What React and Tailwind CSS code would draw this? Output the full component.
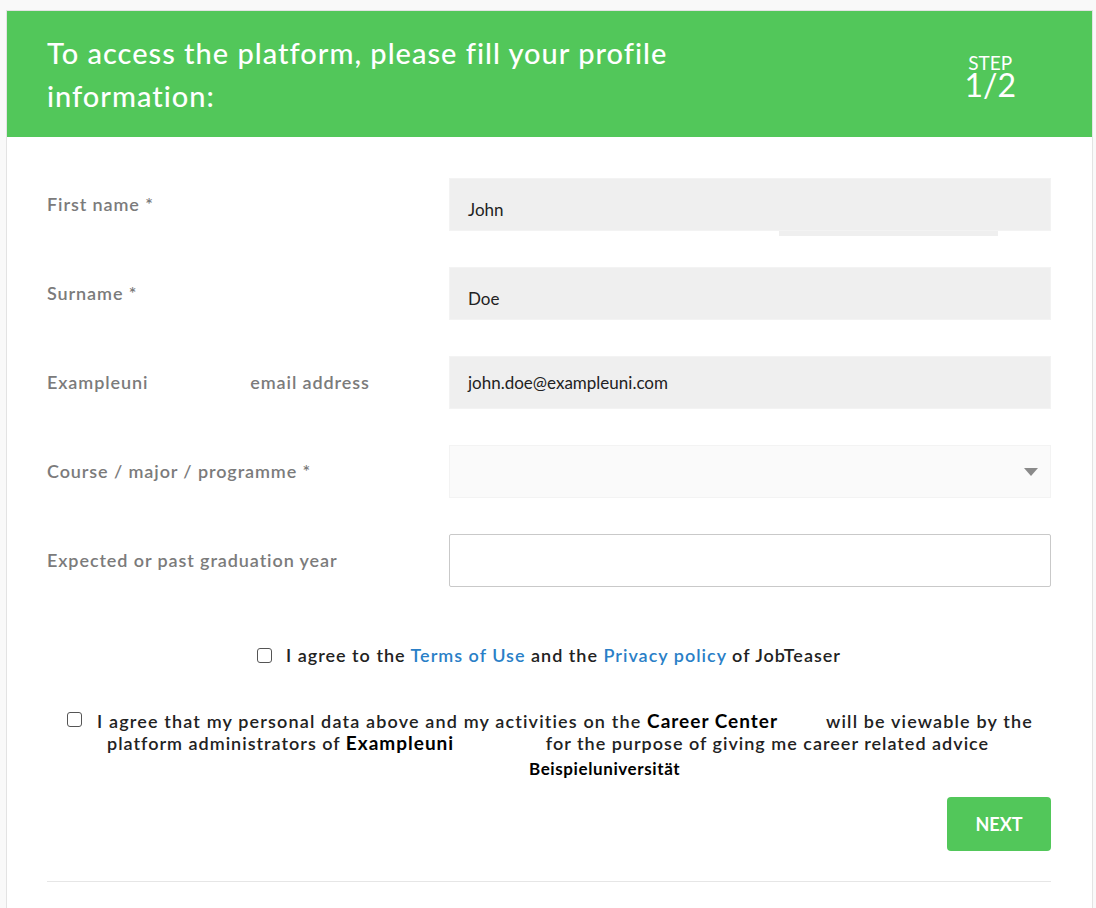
import React from 'react';

const Row = ({ label, children }) => (
  <div className="flex items-center h-[53px] mb-[36px]">
    <div className="w-[402px] shrink-0 text-[18px] tracking-[0.05em] font-semibold text-[#7b7b7b]">{label}</div>
    <div className="flex-1 h-full relative">{children}</div>
  </div>
);

const Filled = ({ value, low }) => (
  <div
    className={
      'h-full w-full bg-[#efefef] border border-[#f3f3f3] flex items-center pl-[18px] text-[17px] text-[#222] font-[\'Open_Sans\',sans-serif] ' +
      (low ? 'pt-[10px]' : 'pt-[1px]')
    }
  >
    {value}
  </div>
);

const App = () => {
  return (
    <div className="w-[1096px] h-[908px] bg-[#f9f9f9] pt-[10px] pl-[6px] overflow-hidden font-['Lato',sans-serif]">
      <div className="w-[1087px] h-[920px] bg-white border border-[#e3e3e3]">
        <div className="bg-[#52c75a] h-[126px] flex items-start justify-between pl-[40px] pr-[76px] pt-[20px]">
          <h1 className="text-[29px] tracking-[1px] leading-[43px] font-medium text-white w-[660px]">
            To access the platform, please fill your profile information:
          </h1>
          <div className="text-white text-center mt-[24px]">
            <div className="text-[19px] leading-[15px]">STEP</div>
            <div className="text-[32px] leading-[30px]">1/2</div>
          </div>
        </div>

        <div className="pl-[40px] pr-[41px] pt-[41px]">
          <Row label="First name *">
            <Filled value="John" low />
            <div className="absolute left-[330px] top-[53px] w-[219px] h-[5px] bg-[#efefef]" />
          </Row>
          <Row label="Surname *">
            <Filled value="Doe" low />
          </Row>
          <Row
            label={
              <span>
                Exampleuni<span className="inline-block w-[102px]" />email address
              </span>
            }
          >
            <Filled value="john.doe@exampleuni.com" />
          </Row>
          <Row label="Course / major / programme *">
            <div className="h-full w-full bg-[#fafafa] border border-[#f3f3f3] flex items-center justify-end pr-[12px]">
              <svg width="14" height="8" viewBox="0 0 14 8">
                <path d="M0 0 L14 0 L7 8 Z" fill="#8a8a8a" />
              </svg>
            </div>
          </Row>
          <Row label="Expected or past graduation year">
            <div className="h-full w-full bg-white border border-[#c9c9c9] rounded-[2px]" />
          </Row>

          <div className="flex items-center justify-center gap-[14px] mt-[56px] h-[24px] text-[18px] tracking-[1px] font-semibold text-[#222]">
            <span className="w-[15px] h-[15px] border border-[#555] rounded-[3px]" />
            <span>
              I agree to the <span className="text-[#2a7fc7]">Terms of Use</span> and the{' '}
              <span className="text-[#2a7fc7]">Privacy policy</span> of JobTeaser
            </span>
          </div>

          <div className="flex items-start mt-[43px] pl-[20px] text-[18px] tracking-[1px] font-semibold text-[#222]">
            <span className="w-[15px] h-[15px] border border-[#555] rounded-[3px] mt-[2px] mr-[15px] shrink-0" />
            <div className="leading-[21px] whitespace-nowrap">
              <div>
                <span className="tracking-[1.15px]">I agree that my personal data above and my activities on the </span>
                <span className="inline-block w-[179px] text-black font-bold text-[19px]">Career Center</span>
                <span className="tracking-[1.15px]">will be viewable by the</span>
              </div>
              <div className="pl-[10px]">
                platform administrators of{' '}
                <span className="inline-block w-[200px] text-black font-bold text-[19px]">Exampleuni</span>
                for the purpose of giving me career related advice
              </div>
              <div className="text-[17px] leading-[18px] tracking-[0.6px] font-bold text-black mt-[6px] pl-[432px]">
                Beispieluniversität
              </div>
            </div>
          </div>

          <div className="flex justify-end mt-[19px]">
            <button className="w-[104px] h-[54px] bg-[#52c75a] rounded-[4px] text-white font-bold text-[18px]">
              NEXT
            </button>
          </div>

          <div className="border-t border-[#e6e6e6] mt-[30px]" />
        </div>
      </div>
    </div>
  );
};

export default App;
